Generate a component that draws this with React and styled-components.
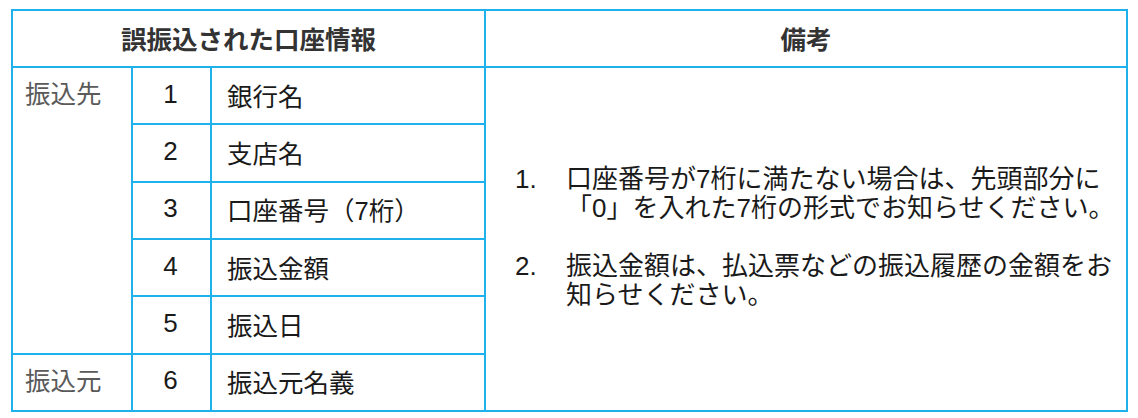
import React from "react";
import styled, { createGlobalStyle } from "styled-components";

const Global = createGlobalStyle`
  html, body { margin: 0; padding: 0; background: #ffffff; }
  body {
    font-family: "Liberation Sans", "Noto Sans CJK JP", sans-serif;
    color: #1a1a1a;
  }
`;

const BORDER = "#1fb1ec";

const Page = styled.div`
  padding: 9px 10px 0 11px;
`;

const Grid = styled.div`
  display: grid;
  width: 1117px;
  box-sizing: border-box;
  grid-template-columns: 120px 79px 274px 642px;
  grid-template-rows: 57px repeat(6, 57.34px);
  border-top: 2px solid ${BORDER};
  border-left: 2px solid ${BORDER};
`;

const Cell = styled.div`
  box-sizing: border-box;
  border-right: 2px solid ${BORDER};
  border-bottom: 2px solid ${BORDER};
  font-size: 25.5px;
  display: flex;
  align-items: center;
  min-width: 0;
  padding-bottom: 3px;
  grid-column: ${(p) => p.$col || "auto"};
  grid-row: ${(p) => p.$row || "auto"};
`;

const HeadCell = styled(Cell)`
  justify-content: center;
  font-weight: 700;
  color: #333333;
  font-size: 25.5px;
`;

const LabelCell = styled(Cell)`
  align-items: flex-start;
  color: #5a5a5a;
  padding-left: 12px;
  line-height: 53px;
`;

const NumCell = styled(Cell)`
  justify-content: center;
  padding-right: 2px;
  font-size: 26px;
`;

const ItemCell = styled(Cell)`
  padding-left: 15px;
  white-space: nowrap;
`;

const NoteCell = styled(Cell)`
  padding-left: 29px;
  padding-top: 0;
`;

const NoteList = styled.ol`
  list-style: none;
  margin: 0;
  padding: 0;
  display: flex;
  flex-direction: column;
  gap: 29px;
  font-size: 26px;
  line-height: 29px;
  color: #1a1a1a;
`;

const NoteItem = styled.li`
  display: flex;
`;

const NoteNum = styled.span`
  flex: 0 0 51px;
`;

const NoteText = styled.span`
  white-space: nowrap;
`;

const rows = [
  ["1", "銀行名"],
  ["2", "支店名"],
  ["3", "口座番号（7桁）"],
  ["4", "振込金額"],
  ["5", "振込日"],
  ["6", "振込元名義"],
];

export default function App() {
  return (
    <>
      <Global />
      <Page>
        <Grid>
          <HeadCell $col="1 / 4" $row="1">誤振込された口座情報</HeadCell>
          <HeadCell $col="4" $row="1">備考</HeadCell>
          <LabelCell $col="1" $row="2 / 7">振込先</LabelCell>
          <LabelCell $col="1" $row="7">振込元</LabelCell>
          {rows.map(([n, label], i) => (
            <React.Fragment key={n}>
              <NumCell $col="2" $row={`${i + 2}`}>{n}</NumCell>
              <ItemCell $col="3" $row={`${i + 2}`}>{label}</ItemCell>
            </React.Fragment>
          ))}
          <NoteCell $col="4" $row="2 / 8">
            <NoteList>
              <NoteItem>
                <NoteNum>1.</NoteNum>
                <NoteText>
                  口座番号が7桁に満たない場合は、先頭部分に
                  <br />
                  「0」を入れた7桁の形式でお知らせください。
                </NoteText>
              </NoteItem>
              <NoteItem>
                <NoteNum>2.</NoteNum>
                <NoteText>
                  振込金額は、払込票などの振込履歴の金額をお
                  <br />
                  知らせください。
                </NoteText>
              </NoteItem>
            </NoteList>
          </NoteCell>
        </Grid>
      </Page>
    </>
  );
}
